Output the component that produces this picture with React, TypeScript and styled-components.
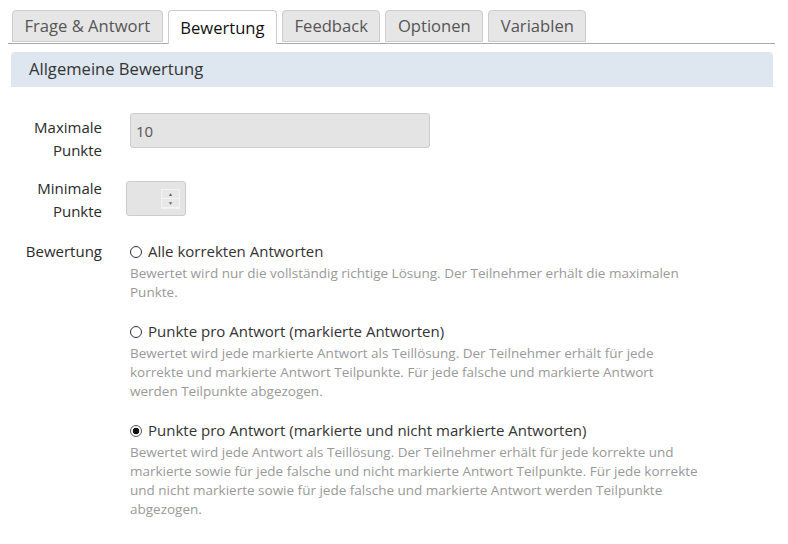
import React, { useState } from "react";
import styled, { createGlobalStyle } from "styled-components";

const GlobalStyle = createGlobalStyle`
  body {
    margin: 0;
    background: #ffffff;
    font-family: "Open Sans", "Liberation Sans", sans-serif;
    color: #333;
  }
`;

const tabs = ["Frage & Antwort", "Bewertung", "Feedback", "Optionen", "Variablen"];

const options = [
  {
    label: "Alle korrekten Antworten",
    desc: "Bewertet wird nur die vollständig richtige Lösung. Der Teilnehmer erhält die maximalen Punkte.",
  },
  {
    label: "Punkte pro Antwort (markierte Antworten)",
    desc: "Bewertet wird jede markierte Antwort als Teillösung. Der Teilnehmer erhält für jede korrekte und markierte Antwort Teilpunkte. Für jede falsche und markierte Antwort werden Teilpunkte abgezogen.",
  },
  {
    label: "Punkte pro Antwort (markierte und nicht markierte Antworten)",
    desc: "Bewertet wird jede Antwort als Teillösung. Der Teilnehmer erhält für jede korrekte und markierte sowie für jede falsche und nicht markierte Antwort Teilpunkte. Für jede korrekte und nicht markierte sowie für jede falsche und markierte Antwort werden Teilpunkte abgezogen.",
  },
];

const App = () => {
  const [active, setActive] = useState(1);
  const [choice, setChoice] = useState(2);

  return (
    <>
      <GlobalStyle />
      <Page>
        <TabBar>
          {tabs.map((t, i) => (
            <Tab key={t} $active={i === active} onClick={() => setActive(i)}>
              {t}
            </Tab>
          ))}
        </TabBar>
        <PanelHeading>Allgemeine Bewertung</PanelHeading>
        <Form>
          <Row>
            <Label $offset={3}>
              Maximale
              <br />
              Punkte
            </Label>
            <TextInput value="10" readOnly />
          </Row>
          <Row>
            <Label>
              Minimale
              <br />
              Punkte
            </Label>
            <NumberBox>
              <Spinner>
                <SpinBtn>▲</SpinBtn>
                <SpinBtn>▼</SpinBtn>
              </Spinner>
            </NumberBox>
          </Row>
          <Row $gapTop={2}>
            <Label>Bewertung</Label>
            <Options>
              {options.map((o, i) => (
                <Option key={o.label}>
                  <RadioLine onClick={() => setChoice(i)}>
                    <Radio $checked={choice === i} />
                    {o.label}
                  </RadioLine>
                  <Desc>{o.desc}</Desc>
                </Option>
              ))}
            </Options>
          </Row>
        </Form>
      </Page>
    </>
  );
};

const Page = styled.div`
  padding: 10px 13px 0 8px;
`;

const TabBar = styled.div`
  display: flex;
  gap: 5px;
  padding-left: 4px;
  border-bottom: 1px solid #aaa;
  height: 33px;
`;

const Tab = styled.div<{ $active?: boolean }>`
  height: ${({ $active }) => ($active ? "34px" : "32px")};
  box-sizing: border-box;
  padding: 0 11.5px 1px;
  display: flex;
  align-items: center;
  font-size: 16.6px;
  color: ${({ $active }) => ($active ? "#111" : "#555")};
  background: ${({ $active }) => ($active ? "#ffffff" : "#e6e6e6")};
  border: 1px solid #ccc;
  border-bottom: ${({ $active }) => ($active ? "none" : "1px solid #ccc")};
  border-radius: 4px 4px 0 0;
  cursor: pointer;
`;

const PanelHeading = styled.div`
  margin: 8px 2px 0 3px;
  height: 35px;
  display: flex;
  align-items: center;
  padding-left: 18px;
  padding-bottom: 2px;
  box-sizing: border-box;
  background: #dee7ef;
  border-radius: 4px 4px 0 0;
  font-size: 16.6px;
  color: #333;
`;

const Form = styled.div`
  padding-top: 26px;
  display: flex;
  flex-direction: column;
  gap: 15px;
`;

const Row = styled.div<{ $gapTop?: number }>`
  display: flex;
  align-items: flex-start;
  gap: 28px;
  margin-top: ${({ $gapTop }) => $gapTop ?? 0}px;
`;

const Label = styled.div<{ $offset?: number }>`
  width: 94px;
  flex-shrink: 0;
  text-align: right;
  font-size: 15px;
  line-height: 23px;
  color: #2a2a2a;
  padding-top: ${({ $offset }) => $offset ?? 0}px;
`;

const TextInput = styled.input`
  width: 300px;
  height: 35px;
  box-sizing: border-box;
  border: 1px solid #ccc;
  border-radius: 3px;
  background: #e4e4e4;
  padding: 0 5px;
  font-family: inherit;
  font-size: 15px;
  color: #555;
  outline: none;
`;

const NumberBox = styled.div`
  margin-left: -4px;
  margin-top: 4px;
  width: 60px;
  height: 35px;
  box-sizing: border-box;
  border: 1px solid #ccc;
  border-radius: 3px;
  background: #e4e4e4;
  display: flex;
  align-items: center;
  justify-content: flex-end;
  padding-right: 5px;
`;

const Spinner = styled.div`
  display: flex;
  flex-direction: column;
  width: 17px;
  border: 1px solid #f2f2f2;
`;

const SpinBtn = styled.div`
  height: 8px;
  font-size: 5px;
  line-height: 8px;
  text-align: center;
  color: #666;
  background: #e8e8e8;
  border-bottom: 1px solid #f4f4f4;
`;

const Options = styled.div`
  display: flex;
  flex-direction: column;
  gap: 18px;
  width: 572px;
`;

const Option = styled.div`
  display: flex;
  flex-direction: column;
`;

const RadioLine = styled.label`
  display: flex;
  align-items: center;
  gap: 6px;
  font-size: 15px;
  line-height: 23px;
  color: #333;
  cursor: pointer;
`;

const Radio = styled.span<{ $checked?: boolean }>`
  width: 12px;
  height: 12px;
  box-sizing: border-box;
  border: 1px solid ${({ $checked }) => ($checked ? "#555" : "#333")};
  border-radius: 50%;
  background: ${({ $checked }) =>
    $checked ? "radial-gradient(circle, #111 0 3px, #fff 3.6px)" : "#fff"};
  flex-shrink: 0;
`;

const Desc = styled.div`
  margin-top: 1px;
  font-size: 13.5px;
  line-height: 19px;
  color: #999;
`;

export default App;
